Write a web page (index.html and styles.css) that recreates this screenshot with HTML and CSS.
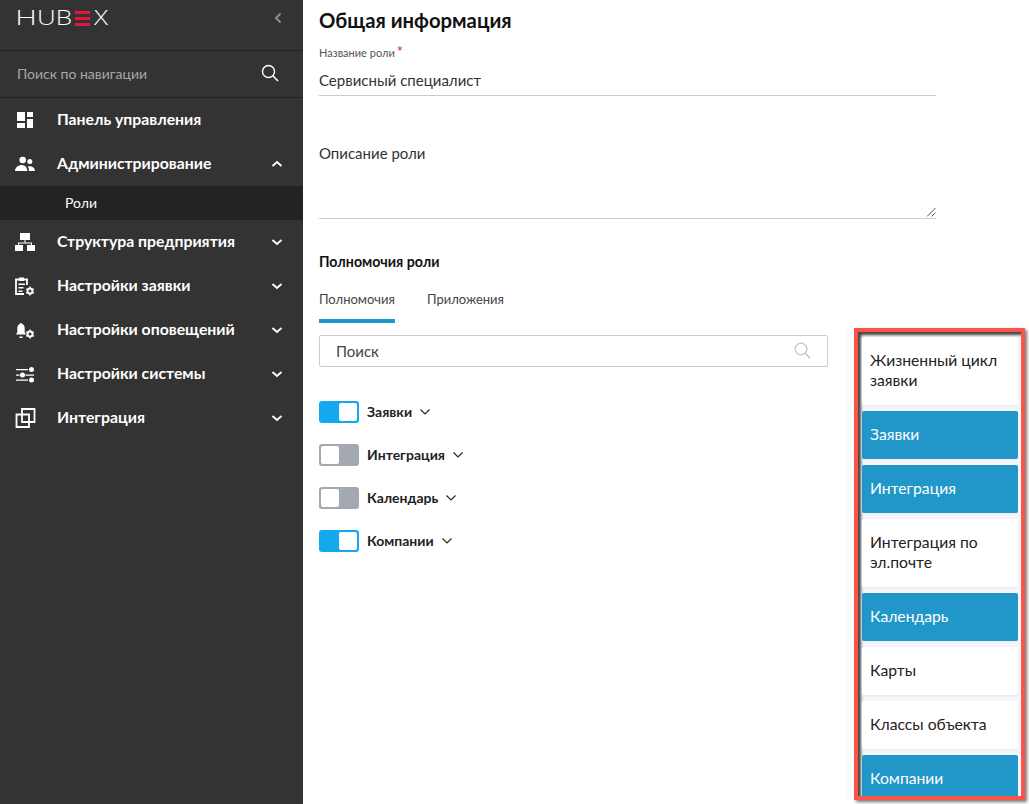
FILE: index.html
```html
<!doctype html>
<html>
  <head>
    <meta charset="utf-8">
    <title>Hubex</title>
    <link rel="stylesheet" href="styles.css">
</head>
<body>

<div id="sidebar">
  <div class="logoRow">
    <div class="logo"><span class="logoH">H</span><span>U</span><span>B</span><i class="logoE"><b></b><b></b><b></b></i><span>X</span></div>
    <svg class="collapse" width="10" height="14" viewBox="0 0 10 14"><path d="M7.500 2.500 3 7l4.500 4.500" fill="none" stroke="#8c8c8c" stroke-width="2"/></svg>
  </div>
  <div class="navSearch">
    <span>Поиск по навигации</span>
    <svg width="18" height="18" viewBox="0 0 18 18"><circle cx="7.500" cy="7.500" r="6" fill="none" stroke="#fff" stroke-width="1.400"/><path d="M12 12l5 5" stroke="#fff" stroke-width="1.600"/></svg>
  </div>
  <div class="navItem">
    <svg class="navIcon" width="22" height="20" viewBox="0 0 22 20"><path d="M2 2h8v9H2zM2 13h8v5H2zM12 2h6v5h-6zM12 9h6v9h-6z" fill="#fff"/></svg>
    <span class="navText">Панель управления</span>
  </div>
  <div class="navItem">
    <svg class="navIcon" width="22" height="20" viewBox="0 0 22 20"><circle cx="7.700" cy="6" r="3.300" fill="#fff"/><circle cx="14.800" cy="7.500" r="2.500" fill="#fff"/><path d="M0 17c0-4 4-6 7-6s5 2 5.500 6zM14 17c0-1.800-.4-3.300-1.300-4.400 3-1 7.300.4 7.300 4.400z" fill="#fff"/></svg>
    <span class="navText">Администрирование</span>
    <svg class="chev" width="12" height="8" viewBox="0 0 12 8"><path d="M1.500 6 6 2l4.500 4" fill="none" stroke="#fff" stroke-width="1.800"/></svg>
  </div>
  <div class="navSub">Роли</div>
  <div class="navItem">
    <svg class="navIcon" width="22" height="20" viewBox="0 0 22 20"><path d="M5 1h10v7H5zM0 13h8v6H0zM12 13h8v6h-8zM9.500 8h1v2.500H17V13h-1v-1.500H4V13H3v-2.500h6.500z" fill="#fff"/></svg>
    <span class="navText">Структура предприятия</span>
    <svg class="chev" width="12" height="8" viewBox="0 0 12 8"><path d="M1.500 2 6 6l4.500-4" fill="none" stroke="#fff" stroke-width="1.800"/></svg>
  </div>
  <div class="navItem">
    <svg class="navIcon" width="22" height="20" viewBox="0 0 22 20"><path d="M9 18H1V3.500h11V9" fill="none" stroke="#fff" stroke-width="1.800"/><path d="M4 1.500h5V5H4zM3.500 7.500h6.500V9H3.500zM3.500 11h5v1.500h-5zM3.500 14.500h4V16h-4z" fill="#fff"/><circle cx="15" cy="15" r="2.500" fill="none" stroke="#fff" stroke-width="2"/><path d="M15 10.500v9M11.100 12.750l7.800 4.500M11.100 17.250l7.800-4.500" stroke="#fff" stroke-width="1.400" stroke-dasharray="1.500 6 1.500"/></svg>
    <span class="navText">Настройки заявки</span>
    <svg class="chev" width="12" height="8" viewBox="0 0 12 8"><path d="M1.500 2 6 6l4.500-4" fill="none" stroke="#fff" stroke-width="1.800"/></svg>
  </div>
  <div class="navItem">
    <svg class="navIcon" width="22" height="20" viewBox="0 0 22 20"><path d="M6 3c.7 0 1 .4 1 1 1.900.5 2.700 2.200 2.700 4.200v4L11 14.500H1L2.300 12.200v-4c0-2 .8-3.700 2.700-4.200 0-.6.3-1 1-1zM4.500 16.500h3V18h-3z" fill="#fff"/><circle cx="15" cy="14" r="2.500" fill="none" stroke="#fff" stroke-width="2"/><path d="M15 9.500v9M11.100 11.750l7.800 4.500M11.100 16.250l7.800-4.500" stroke="#fff" stroke-width="1.400" stroke-dasharray="1.500 6 1.500"/></svg>
    <span class="navText">Настройки оповещений</span>
    <svg class="chev" width="12" height="8" viewBox="0 0 12 8"><path d="M1.500 2 6 6l4.500-4" fill="none" stroke="#fff" stroke-width="1.800"/></svg>
  </div>
  <div class="navItem">
    <svg class="navIcon" width="22" height="20" viewBox="0 0 22 20"><path d="M1 5h12v1.200H1zM1 10.500h3.500v1.200H1zM10.500 10.500H19v1.200h-8.500zM1 15.500h12v1.200H1z" fill="#fff"/><circle cx="16.500" cy="5.500" r="2.500" fill="#fff"/><circle cx="7.500" cy="11" r="2.500" fill="#fff"/><circle cx="16.500" cy="16" r="2.500" fill="#fff"/></svg>
    <span class="navText">Настройки системы</span>
    <svg class="chev" width="12" height="8" viewBox="0 0 12 8"><path d="M1.500 2 6 6l4.500-4" fill="none" stroke="#fff" stroke-width="1.800"/></svg>
  </div>
  <div class="navItem">
    <svg class="navIcon" width="22" height="20" viewBox="0 0 22 20"><path d="M1.500 6.500h12.500v12.500H1.500zM7 1h12.500v13H7z" fill="none" stroke="#fff" stroke-width="1.800"/></svg>
    <span class="navText">Интеграция</span>
    <svg class="chev" width="12" height="8" viewBox="0 0 12 8"><path d="M1.500 2 6 6l4.500-4" fill="none" stroke="#fff" stroke-width="1.800"/></svg>
  </div>
</div>

<div id="content">
  <h1 class="pageTitle">Общая информация</h1>

  <div class="field">
    <div class="fieldLabel">Название роли<span class="req">*</span></div>
    <div class="fieldValue">Сервисный специалист</div>
  </div>

  <div class="areaField">
    <span>Описание роли</span>
    <svg class="grip" width="9" height="9" viewBox="0 0 9 9"><path d="M0 8.500 8.500 0M4.500 8.500l4-4" stroke="#555" stroke-width="1"/></svg>
  </div>

  <div class="sectionTitle">Полномочия роли</div>

  <div class="tabs">
    <div class="tab active">Полномочия</div>
    <div class="tab">Приложения</div>
  </div>

  <div class="searchBox">
    <span>Поиск</span>
    <svg width="17" height="17" viewBox="0 0 17 17"><circle cx="7" cy="7" r="5.800" fill="none" stroke="#c4c4c4" stroke-width="1.300"/><path d="M11.200 11.200l5 5" stroke="#c4c4c4" stroke-width="1.600"/></svg>
  </div>

  <div class="perms">
    <div class="perm">
      <div class="toggle on"><i></i></div><span>Заявки</span>
      <svg width="10" height="6" viewBox="0 0 10 6"><path d="M.5.500 5 5 9.500.500" fill="none" stroke="#222" stroke-width="1.100"/></svg>
    </div>
    <div class="perm">
      <div class="toggle"><i></i></div><span>Интеграция</span>
      <svg width="10" height="6" viewBox="0 0 10 6"><path d="M.5.500 5 5 9.500.500" fill="none" stroke="#222" stroke-width="1.100"/></svg>
    </div>
    <div class="perm">
      <div class="toggle"><i></i></div><span>Календарь</span>
      <svg width="10" height="6" viewBox="0 0 10 6"><path d="M.5.500 5 5 9.500.500" fill="none" stroke="#222" stroke-width="1.100"/></svg>
    </div>
    <div class="perm">
      <div class="toggle on"><i></i></div><span>Компании</span>
      <svg width="10" height="6" viewBox="0 0 10 6"><path d="M.5.500 5 5 9.500.500" fill="none" stroke="#222" stroke-width="1.100"/></svg>
    </div>
  </div>
</div>

<div id="modules">
  <div class="module">Жизненный цикл заявки</div>
  <div class="module on">Заявки</div>
  <div class="module on">Интеграция</div>
  <div class="module">Интеграция по эл.почте</div>
  <div class="module on">Календарь</div>
  <div class="module">Карты</div>
  <div class="module">Классы объекта</div>
  <div class="module on">Компании</div>
</div>

  </body>
</html>
```

FILE: styles.css
```css
*{
  box-sizing: border-box;
}
html,body{
  height: 100%;
}
body{
  margin: 0;
  padding: 0;
  display: flex;
  overflow: hidden;
  background-color: #fff;
  font-family: "Lato", "Open Sans", sans-serif;
  color: #222;
}
#sidebar{
  width: 303px;
  flex: none;
  background-color: #333;
  color: #fff;
}
.logoRow{
  height: 51px;
  padding: 0 20px 14px 17px;
  border-bottom: 1px solid #222;
  display: flex;
  align-items: center;
  justify-content: space-between;
}
.logo{
  display: flex;
  align-items: center;
  gap: 4px;
  font-family: "Open Sans", sans-serif;
  font-weight: 300;
  font-size: 20px;
  line-height: 24px;
  color: #fff;
}
.logo span{
  display: block;
  width: 14px;
  text-align: center;
  transform: scaleX(1.3);
}
.logo .logoH{
  width: 18px;
  transform: scaleX(1.5);
}
.logoE{
  display: flex;
  flex-direction: column;
  gap: 3px;
  width: 15px;
}
.logoE b{
  display: block;
  height: 3px;
  background-color: #e3173e;
}
.navSearch{
  height: 47px;
  padding: 0 24px 2px 17px;
  border-bottom: 1px solid #222;
  display: flex;
  align-items: center;
  justify-content: space-between;
  font-size: 14px;
  color: #a8a8a8;
}
.navItem{
  height: 44px;
  padding: 0 20px 0 15px;
  display: flex;
  align-items: center;
}
.navIcon{
  flex: none;
}
.navText{
  margin-left: 20px;
  padding-bottom: 4px;
  flex: 1;
  font-size: 15.800px;
  font-weight: 700;
}
.navSub{
  height: 34px;
  padding: 0 0 2px 65px;
  display: flex;
  align-items: center;
  background-color: #232323;
  font-size: 14px;
}
#content{
  flex: 1;
  padding: 9px 0 0 16px;
}
.pageTitle{
  margin: 0;
  font-size: 20.300px;
  line-height: 22px;
  font-weight: 700;
  color: #111;
}
.field{
  width: 617px;
  margin-top: 15px;
  height: 50px;
  border-bottom: 1px solid #ccc;
}
.fieldLabel{
  font-size: 11px;
  line-height: 14px;
  color: #555;
}
.req{
  color: #e3173e;
  font-size: 15px;
  margin-left: 2px;
  line-height: 10px;
}
.fieldValue{
  margin-top: 10px;
  font-size: 15px;
  line-height: 20px;
  color: #333;
}
.areaField{
  position: relative;
  width: 617px;
  height: 123px;
  padding-top: 47px;
  border-bottom: 1px solid #ccc;
  font-size: 15px;
  line-height: 20px;
  color: #333;
}
.grip{
  position: absolute;
  right: 0;
  bottom: 1px;
}
.sectionTitle{
  margin-top: 34px;
  font-size: 14.200px;
  line-height: 18px;
  font-weight: 700;
  color: #111;
}
.tabs{
  display: flex;
  gap: 32px;
  margin-top: 18px;
}
.tab{
  height: 34px;
  font-size: 13px;
  line-height: 20px;
  color: #444;
}
.tab.active{
  border-bottom: 4px solid #2196c8;
}
.searchBox{
  width: 509px;
  height: 32px;
  margin-top: 12px;
  padding: 0 16px 1px 16px;
  border: 1px solid #ccc;
  border-radius: 2px;
  display: flex;
  align-items: center;
  justify-content: space-between;
  font-size: 15px;
  color: #444;
}
.perms{
  margin-top: 34px;
}
.perm{
  height: 43px;
  display: flex;
  align-items: flex-start;
  font-size: 14px;
  line-height: 21px;
  font-weight: 700;
  color: #222;
}
.perm svg{
  margin: 8px 0 0 8px;
}
.toggle{
  width: 40px;
  height: 22px;
  margin-right: 8px;
  border-radius: 3px;
  padding: 2px;
  background-color: #a2a9b1;
}
.toggle i{
  display: block;
  width: 18px;
  height: 18px;
  border-radius: 2px;
  background-color: #fff;
}
.toggle.on{
  background-color: #14a9ef;
  padding-left: 20px;
}
/* annotation frame over the page */
#modules{
  position: absolute;
  left: 854px;
  top: 328px;
  width: 171px;
  height: 472px;
  padding: 5px 3px 0 4px;
  overflow: hidden;
  border: 4px solid #fb5549;
  background-color: #f5f6fa;
  box-shadow: inset 3px 3px 3px #444, 2px 2px 3px #777, -8px 0 0 #fbfcfe;
}
.module{
  min-height: 48px;
  margin-bottom: 6px;
  padding: 13px 8px 15px;
  border-radius: 2px;
  background-color: #fff;
  box-shadow: 0 1px 2px #e6e7ee;
  font-size: 15.700px;
  line-height: 20px;
  color: #222;
}
.module.on{
  background-color: #2196c8;
  color: #fff;
}
```
